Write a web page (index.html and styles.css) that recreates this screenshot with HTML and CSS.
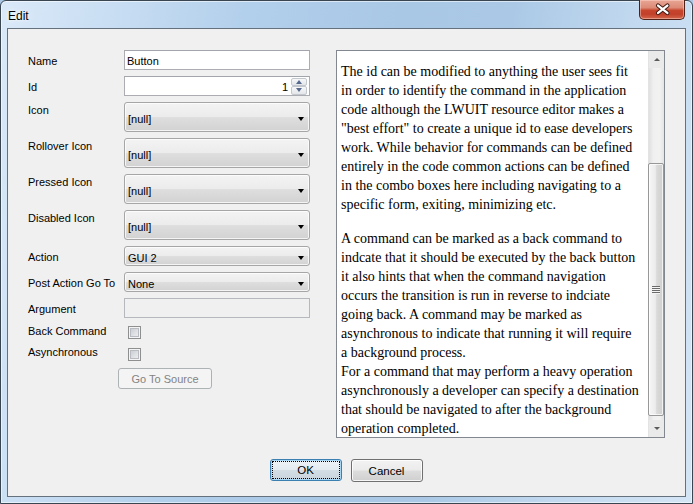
FILE: index.html
```html
<!DOCTYPE html>
<html>
<head>
<meta charset="utf-8">
<title>Edit</title>
<link rel="stylesheet" href="styles.css">
</head>
<body>
<div class="window">
  <div class="titlebar">
    <span class="title">Edit</span>
    <div class="close">
      <svg width="46" height="19" viewBox="0 0 46 19">
        <path d="M19.5 6.5 L29 14 M29 6.5 L19.5 14" stroke="#3d1710" stroke-width="4.4" stroke-linecap="round" fill="none"/>
        <path d="M19.5 6.5 L29 14 M29 6.5 L19.5 14" stroke="#ffffff" stroke-width="2.4" stroke-linecap="round" fill="none"/>
      </svg>
    </div>
  </div>
  <div class="client">
    <div class="main">
      <div class="form">
        <div class="row"><span class="lbl">Name</span><div class="field">Button</div></div>
        <div class="row"><span class="lbl">Id</span>
          <div class="field num"><span class="val">1</span>
            <span class="spin"><span class="spin-btn"><i class="tri-up"></i></span><span class="spin-btn"><i class="tri-down"></i></span></span>
          </div>
        </div>
        <div class="row tall"><span class="lbl">Icon</span><div class="combo"><span>[null]</span><i class="arrow"></i></div></div>
        <div class="row tall"><span class="lbl">Rollover Icon</span><div class="combo"><span>[null]</span><i class="arrow"></i></div></div>
        <div class="row tall"><span class="lbl">Pressed Icon</span><div class="combo"><span>[null]</span><i class="arrow"></i></div></div>
        <div class="row tall"><span class="lbl">Disabled Icon</span><div class="combo"><span>[null]</span><i class="arrow"></i></div></div>
        <div class="row"><span class="lbl">Action</span><div class="combo"><span>GUI 2</span><i class="arrow"></i></div></div>
        <div class="row"><span class="lbl">Post Action Go To</span><div class="combo"><span>None</span><i class="arrow"></i></div></div>
        <div class="row"><span class="lbl">Argument</span><div class="field disabled"></div></div>
        <div class="row check back"><span class="lbl">Back Command</span><span class="checkbox"></span></div>
        <div class="row check async"><span class="lbl">Asynchronous</span><span class="checkbox"></span></div>
        <button class="btn source" disabled>Go To Source</button>
      </div>
      <div class="help">
        <div class="doc">
          <p>The id can be modified to anything the user sees fit<br>in order to identify the command in the application<br>code although the LWUIT resource editor makes a<br>"best effort" to create a unique id to ease developers<br>work. While behavior for commands can be defined<br>entirely in the code common actions can be defined<br>in the combo boxes here including navigating to a<br>specific form, exiting, minimizing etc.</p>
          <p>A command can be marked as a back command to<br>indcate that it should be executed by the back button<br>it also hints that when the command navigation<br>occurs the transition is run in reverse to indciate<br>going back. A command may be marked as<br>asynchronous to indicate that running it will require<br>a background process.<br>For a command that may perform a heavy operation<br>asynchronously a developer can specify a destination<br>that should be navigated to after the background<br>operation completed.</p>
        </div>
        <div class="sb">
          <div class="sb-btn"><i class="sb-up"></i></div>
          <div class="sb-track"><div class="sb-thumb"><span class="grip"></span></div></div>
          <div class="sb-btn"><i class="sb-down"></i></div>
        </div>
      </div>
    </div>
    <div class="actions">
      <button class="btn push default"><span class="focus">OK</span></button>
      <button class="btn push">Cancel</button>
    </div>
  </div>
</div>
</body>
</html>
```

FILE: styles.css
```css
* { box-sizing: border-box; }
html, body { margin: 0; padding: 0; }
body {
  width: 693px;
  height: 504px;
  overflow: hidden;
  background: #a9c7e4;
  font-family: "Liberation Sans", Arial, sans-serif;
  font-size: 11px;
  color: #000;
}

.window {
  width: 693px;
  height: 504px;
  border: 1px solid #3a4552;
  border-radius: 6px 6px 0 0;
  padding: 0 6px 6px 6px;
  display: flex;
  flex-direction: column;
  background:
    linear-gradient(100deg, #dae9f8 0%, #c9def3 14%, #b2cfeb 32%, #a9c8e6 52%, #abc9e6 66%, #c2d9ef 82%, #d4e5f5 100%);
  box-shadow: inset 0 0 0 1px rgba(255,255,255,0.55);
}

.titlebar {
  height: 28px;
  display: flex;
  align-items: flex-start;
  padding-left: 1px;
}
.title {
  font-family: "Liberation Sans", Arial, sans-serif;
  font-size: 12px;
  line-height: 14px;
  margin-top: 8px;
  color: #000;
  text-shadow: 0 0 6px rgba(255,255,255,0.9), 0 0 3px rgba(255,255,255,0.9);
}
.close {
  margin-left: auto;
  margin-top: -1px;
  margin-right: 1px;
  width: 46px;
  height: 20px;
  border: 1px solid #4f2119;
  border-top: none;
  border-radius: 0 0 5px 5px;
  background: linear-gradient(#e9a595 0%, #dc8b77 40%, #c7452d 55%, #c2402a 75%, #d4664c 100%);
  box-shadow: inset 0 0 0 1px rgba(255,220,210,0.45);
  display: flex;
}
.close svg { display: block; margin: -1px 0 0 -1px; }

.client {
  flex: 1;
  border: 1px solid #66717e;
  background: #f0f0f0;
  padding: 21px 20px 14px 20px;
  display: flex;
  flex-direction: column;
}

.main {
  display: flex;
  gap: 26px;
  height: 388px;
}

.form {
  width: 282px;
  display: flex;
  flex-direction: column;
  gap: 6px;
}
.row {
  display: grid;
  grid-template-columns: 96px 186px;
  height: 20px;
  align-items: center;
}
.lbl { line-height: 13px; white-space: nowrap; padding-top: 2px; }
.row.tall { height: 30px; align-items: start; }
.row.tall .lbl { padding-top: 0; margin-top: 2px; }

.field {
  height: 20px;
  border: 1px solid #abadb3;
  border-top-color: #a2a5ab;
  background: #fff;
  padding: 1px 3px 0 2px;
  line-height: 18px;
  display: flex;
  align-items: center;
}
.field.disabled { background: #f0f0f0; border-color: #b5b8bd; }
.field.num { padding: 0 1px 0 2px; }
.val { flex: 1; text-align: right; padding-right: 3px; padding-top: 1px; }
.spin {
  width: 16px;
  height: 17px;
  margin-right: 1px;
  display: flex;
  flex-direction: column;
}
.spin-btn {
  flex: 1;
  border: 1px solid #c3c8ce;
  border-radius: 2px;
  background: linear-gradient(#f8f8f8, #e3e6ea);
  display: flex;
  align-items: center;
  justify-content: center;
}
.tri-up, .tri-down { width: 0; height: 0; border-left: 3.5px solid transparent; border-right: 3.5px solid transparent; }
.tri-up { border-bottom: 4px solid #56698c; }
.tri-down { border-top: 4px solid #56698c; }

.combo {
  height: 100%;
  border: 1px solid #a6a6a6;
  border-radius: 3px;
  background: linear-gradient(#f3f3f3 0%, #ececec 48%, #dedede 52%, #d2d2d2 100%);
  box-shadow: inset 0 0 0 1px rgba(255,255,255,0.75);
  display: flex;
  align-items: center;
  padding: 3px 5px 0 3px;
}
.arrow {
  margin-left: auto;
  width: 0; height: 0;
  border-left: 3.5px solid transparent;
  border-right: 3.5px solid transparent;
  border-top: 4px solid #000;
}

.row.check { align-items: start; height: 15px; }
.row.check .lbl { padding-top: 1px; }
.row.check.async { height: 17px; margin-top: -1px; }
.row.check.async .lbl { padding-top: 2px; }
.checkbox {
  width: 13px;
  height: 13px;
  margin-left: 4px;
  margin-top: 2px;
  border: 1px solid #8e8f8f;
  background: linear-gradient(135deg, #c3c7cc 0%, #e1e3e5 60%, #f3f3f3 100%);
  box-shadow: inset 0 0 0 1px #f4f4f4, inset 0 0 0 2px #b8bcc2;
}
.row.check.async .checkbox { margin-top: 4px; }

.btn {
  font-family: "Liberation Sans", Arial, sans-serif;
  font-size: 11.5px;
  color: #000;
  border-radius: 3px;
  padding: 0;
}
.btn.source {
  margin-top: 1px;
  margin-left: 90px;
  width: 94px;
  height: 21px;
  border: 1px solid #adb2b5;
  background: #f4f4f4;
  color: #838383;
  font-size: 11px;
}

.help {
  width: 329px;
  height: 388px;
  border: 1px solid #828790;
  background: #fff;
  display: flex;
}
.doc {
  flex: 1;
  overflow: hidden;
  padding: 11px 0 0 4px;
  font-family: "Liberation Serif", "Times New Roman", serif;
  font-size: 14px;
  line-height: 19px;
  white-space: nowrap;
}
.doc p { margin: 0 0 15px 0; }

.sb {
  width: 16px;
  display: flex;
  flex-direction: column;
  background: #eaeaea;
  border-left: 1px solid #e3e3e3;
}
.sb-btn {
  height: 17px;
  display: flex;
  align-items: center;
  justify-content: center;
}
.sb-up, .sb-down { width: 0; height: 0; border-left: 3.5px solid transparent; border-right: 3.5px solid transparent; }
.sb-up { border-bottom: 3.5px solid #5a5a5a; }
.sb-down { border-top: 3.5px solid #5a5a5a; }
.sb-track {
  flex: 1;
  display: flex;
  flex-direction: column;
  background: linear-gradient(90deg, #e0e0e0, #f0f0f0 30%, #f2f2f2 70%, #e4e4e4);
}
.sb-thumb {
  margin-top: 95px;
  height: 253px;
  margin-left: -1px;
  width: 16px;
  border: 1px solid #989898;
  border-radius: 2px;
  background: linear-gradient(90deg, #f6f6f6 0%, #ececec 45%, #dadada 55%, #cfcfcf 100%);
  box-shadow: inset 0 0 0 1px rgba(255,255,255,0.7);
  display: flex;
  align-items: center;
  justify-content: center;
}
.grip {
  width: 8px;
  height: 8px;
  background: repeating-linear-gradient(#6b6b6b 0 1px, #f4f4f4 1px 2px);
}

.actions {
  margin-top: 21px;
  display: flex;
  justify-content: center;
  gap: 9px;
  padding-right: 1px;
}
.btn.push {
  width: 72px;
  height: 23px;
  border: 1px solid #707070;
  background: linear-gradient(#f2f2f2 0%, #ebebeb 48%, #dddddd 52%, #cfcfcf 100%);
  box-shadow: inset 0 0 0 1px rgba(255,255,255,0.8);
}
.btn.push.default {
  height: 22px;
  border-color: #3c7fb1;
  background: linear-gradient(#eef3f7 0%, #e4ebf0 48%, #d3dde4 52%, #c9d4dc 100%);
  box-shadow: inset 0 0 0 1px #a6d8f5;
  padding: 2px;
}
.focus {
  display: flex;
  align-items: center;
  justify-content: center;
  width: 100%;
  height: 100%;
  outline: 1px dotted #000;
}
```
